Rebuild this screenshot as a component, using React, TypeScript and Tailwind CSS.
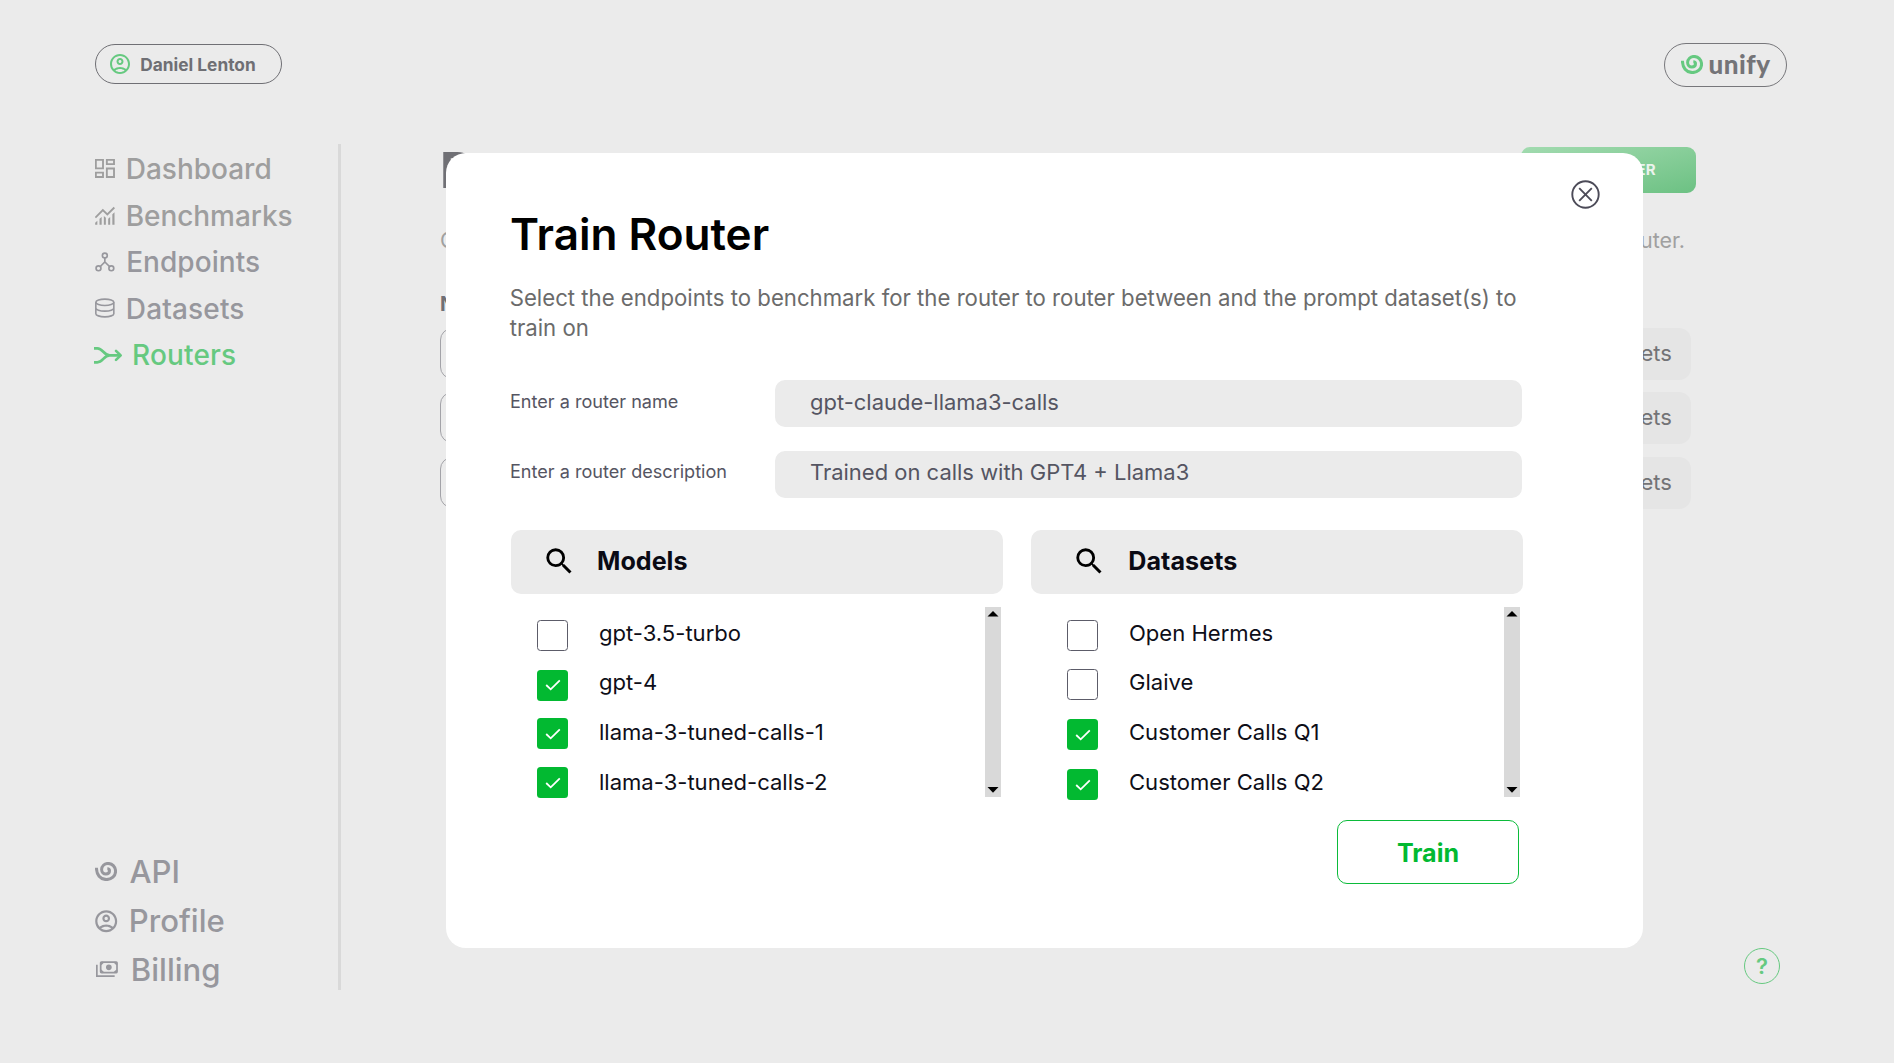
import React from "react";
import { MdOutlineAccountCircle, MdSearch } from "react-icons/md";

type IconProps = { className?: string };

const Spiral = ({ className }: IconProps) => (
  <svg viewBox="45 66 66 57" className={className} fill="none" stroke="currentColor" strokeWidth="9">
    <path d="M49.3 83C49 104 61 118.700 79 118.700C95 118.700 106.700 108 106.700 94C106.700 80 96.500 70.300 84 70.300C73 70.300 64.800 78.500 64.800 88.500C64.800 97 71 102 77.500 102C84.500 102 88.500 97.500 88.500 92.500C88.500 89 86 86.500 82 86.500" />
  </svg>
);

const DashboardIcon = () => (
  <svg viewBox="45 388 59 57" className="h-[19px] w-[19.700px]" fill="none" stroke="currentColor" strokeWidth="5.600">
    <path d="M47.500 390.500H69V416H47.500ZM80.500 390.500H102V403.500H80.500ZM47.500 429H69V442H47.500ZM80.500 416.500H102V442H80.500Z" />
  </svg>
);

const BenchmarksIcon = () => (
  <svg viewBox="45 529 59 57" className="h-[19px] w-[19.700px]" fill="currentColor">
    <path d="M46 564L68.500 541.500L82 554.500L103 533.500" fill="none" stroke="currentColor" strokeWidth="5.600" />
    <path d="M45.500 585V579L52 573V585ZM58.500 585V567L65 562V585ZM71.500 585V559L77.500 564V585ZM84.500 585V567L90.500 562V585ZM97 585V554L103.500 548V585Z" />
  </svg>
);

const EndpointsIcon = () => (
  <svg viewBox="46 667 60 60" className="h-5 w-5" fill="none" stroke="currentColor" strokeWidth="5">
    <circle cx="75.500" cy="677.500" r="7.300" />
    <circle cx="56.500" cy="716" r="7.300" />
    <circle cx="95" cy="716" r="7.300" />
    <path d="M75.500 685V697M62 710.500L75.500 697L89.500 710.500" />
  </svg>
);

const DatasetsIcon = () => (
  <svg viewBox="45 806 60 60" className="h-5 w-5" fill="none" stroke="currentColor" strokeWidth="4.800">
    <ellipse cx="74.500" cy="819" rx="27" ry="9.500" />
    <path d="M47.500 819V853C47.500 858 59 862.500 74.500 862.500S101.500 858 101.500 853V819M47.500 836C47.500 841 59 845.500 74.500 845.500S101.500 841 101.500 836" />
  </svg>
);

const RoutersIcon = () => (
  <svg viewBox="42 948 86 56" className="h-[18.700px] w-[28.700px]" fill="none" stroke="currentColor" strokeWidth="8" strokeLinejoin="round">
    <path d="M42 955H52C69 955 71 976 89 976H121M42 997H52C69 997 71 976 89 976" />
    <path d="M108 962.500L122 976L108 989.500" strokeLinecap="round" />
  </svg>
);

const BillingIcon = () => (
  <svg viewBox="48 365 66 50" className="h-[16.700px] w-[22px]" fill="none" stroke="currentColor" strokeWidth="5.200">
    <path d="M50.500 376V410.500H104" />
    <rect x="62" y="368.500" width="49" height="31" rx="2" />
    <path d="M62 376L70 368.500M103 368.500L111 376M62 392L70 399.500M103 399.500L111 392" />
    <circle cx="86.500" cy="384" r="8.500" fill="currentColor" stroke="none" />
  </svg>
);

function NavRow({ icon, label, className }: { icon: React.ReactNode; label: string; className: string }) {
  return (
    <div className={`flex items-center ${className}`}>
      {icon}
      <span className="pt-px">{label}</span>
    </div>
  );
}

function Sidebar() {
  return (
    <aside className="flex h-[846px] w-[341px] flex-col border-r-[3px] border-[#d9d9d9] pt-[1.500px] pl-[95px] font-medium">
      <nav className="text-[28px] text-[#97979d]">
        <NavRow icon={<DashboardIcon />} label="Dashboard" className="h-[46.550px] gap-[11px] text-[#9e9e9e]" />
        <NavRow icon={<BenchmarksIcon />} label="Benchmarks" className="h-[46.550px] gap-[11px] tracking-[-0.050px] text-[#9e9e9e]" />
        <NavRow icon={<EndpointsIcon />} label="Endpoints" className="h-[46.550px] gap-[11.200px] tracking-[0.050px]" />
        <NavRow icon={<DatasetsIcon />} label="Datasets" className="h-[46.550px] gap-[10.800px] tracking-[0.150px]" />
        <NavRow icon={<RoutersIcon />} label="Routers" className="-ml-px h-[46.550px] gap-[9.400px] tracking-[0.150px] text-[#66c980]" />
      </nav>
      <nav className="mt-[469px] text-[31.100px] text-[#97979d]">
        <NavRow icon={<Spiral className="h-[19px] w-[22px]" />} label="API" className="h-[49px] gap-[12.400px]" />
        <NavRow icon={<MdOutlineAccountCircle className="-ml-[2.200px] size-[26.400px]" />} label="Profile" className="h-[49px] gap-[9.600px]" />
        <NavRow icon={<BillingIcon />} label="Billing" className="ml-px h-[49px] gap-[12.800px]" />
      </nav>
    </aside>
  );
}

function TopBar() {
  return (
    <header className="flex h-[144px] items-start justify-between pr-[107px] pl-[95px]">
      <div className="mt-[44px] flex h-10 w-[187px] items-center gap-[8.300px] rounded-full border border-[#6f6f74] pl-3 text-[17.300px] font-bold text-[#6f6f74]">
        <MdOutlineAccountCircle className="size-6 text-[#66c980]" />
        <span className="pt-[1.500px]">Daniel Lenton</span>
      </div>
      <div className="mt-[43px] flex h-[43.500px] w-[123px] items-center rounded-full border border-[#77777b] pl-[16px] text-[#747478]">
        <Spiral className="h-[19px] w-[22px] text-[#66c980]" />
        <span className="ml-[5.500px] pb-[2px] font-['Lato'] text-[26px] leading-none font-black tracking-[0.500px]">unify</span>
      </div>
    </header>
  );
}

const routerRows = ["mt-0", "mt-3", "mt-[13px]"];

function RoutersPage() {
  return (
    <main className="ml-[99px] w-[1256px]">
      <div className="flex justify-between pt-[3px]">
        <h1 className="h-[46px] text-[50px] leading-[47px] font-bold text-[#707075]">Routers</h1>
        <div className="mr-[0.500px] flex h-[46px] w-[175px] items-center justify-end rounded-[9px] bg-linear-to-br from-[#a2dbb0] to-[#6cc183] pr-[40px] text-[15px] font-bold text-[#ebf3ed]">
          ROUTER
        </div>
      </div>
      <div className="mt-8 flex h-[30px] items-center justify-between pr-[11px] text-[21.500px] text-[#a0a0a0]">
        <span>Our</span>
        <span>router.</span>
      </div>
      <div className="mt-[34px] h-[30px] text-[20px] leading-[30px] font-bold text-[#707075]">Name</div>
      <div className="mt-[8.500px] w-[1251.300px]">
        {routerRows.map((row) => (
          <div key={row} className={`flex h-[52px] items-center justify-between ${row}`}>
            <div className="h-[51px] w-[600px] rounded-[12px] border border-[#a3a3a8]" />
            <div className="flex h-full w-[220px] items-center justify-end rounded-[12px] bg-[#e5e5e5] pr-[19.500px] text-[22px] text-[#737376]">
              Datasets
            </div>
          </div>
        ))}
      </div>
    </main>
  );
}

function Checkbox({ checked, className }: { checked: boolean; className: string }) {
  return checked ? (
    <span className={`flex size-[31px] shrink-0 items-center justify-center rounded-[3.500px] bg-[#02b931] ${className}`}>
      <svg viewBox="0 0 16 12" className="ml-px h-3 w-4" fill="none" stroke="white" strokeWidth="1.800">
        <path d="M1.200 6L5.700 10.300L14.800 1.300" />
      </svg>
    </span>
  ) : (
    <span className={`size-[31px] shrink-0 rounded-[3.500px] border-[1.500px] border-[#5c5c69] bg-white ${className}`} />
  );
}

type Option = { label: string; checked: boolean; box: string };

const models: Option[] = [
  { label: "gpt-3.5-turbo", checked: false, box: "mt-[5px]" },
  { label: "gpt-4", checked: true, box: "mt-[5px]" },
  { label: "llama-3-tuned-calls-1", checked: true, box: "mt-[2px]" },
  { label: "llama-3-tuned-calls-2", checked: true, box: "mt-0" },
];

const datasets: Option[] = [
  { label: "Open Hermes", checked: false, box: "mt-[5px]" },
  { label: "Glaive", checked: false, box: "mt-[3px]" },
  { label: "Customer Calls Q1", checked: true, box: "mt-[4px]" },
  { label: "Customer Calls Q2", checked: true, box: "mt-[4px]" },
];

function Scrollbar() {
  return (
    <div className="flex h-[190px] w-4 flex-col items-center justify-between bg-[#d9d9d9] pt-1 pb-[4.500px]">
      <svg viewBox="0 0 12 6" className="h-[6px] w-3"><path d="M0.500 5.500L6 0L11.500 5.500Z" /></svg>
      <svg viewBox="0 0 12 6" className="h-[6px] w-3"><path d="M0.500 0L6 5.700L11.500 0Z" /></svg>
    </div>
  );
}

type PickerProps = { title: string; options: Option[]; header: string; titleGap: string; list: string; bar: string };

function Picker({ title, options, header, titleGap, list, bar }: PickerProps) {
  return (
    <section className="w-[492px]">
      <div className={`flex h-16 items-center rounded-[10px] bg-[#ebebeb] pb-[2px] ${header}`}>
        <MdSearch className="size-[34.600px] text-black" />
        <h2 className={`pt-px text-[25.100px] font-bold text-[#0a0a14] ${titleGap}`}>{title}</h2>
      </div>
      <div className={`mt-[13px] flex h-[190px] justify-between ${bar}`}>
        <ul className={`pt-[1.300px] ${list}`}>
          {options.map((o) => (
            <li key={o.label} className="flex h-[49.800px] items-center text-[22.050px] text-[#0e0e18]">
              <Checkbox checked={o.checked} className={o.box} />
              <span className="ml-[31.500px]">{o.label}</span>
            </li>
          ))}
        </ul>
        <Scrollbar />
      </div>
    </section>
  );
}

function Field({ label, value, labelPad, valuePad }: { label: string; value: string; labelPad: string; valuePad: string }) {
  return (
    <label className="flex h-[47px] items-center text-[#555562]">
      <span className={`w-[265px] text-[18.080px] ${labelPad}`}>{label}</span>
      <span className={`flex h-full w-[747px] items-center rounded-[10px] bg-[#ebebeb] pl-[35px] text-[21.980px] ${valuePad}`}>{value}</span>
    </label>
  );
}

function TrainDialog() {
  return (
    <div className="absolute inset-0 pt-[153px] pl-[446px]">
      <div role="dialog" className="relative h-[795px] w-[1197px] rounded-[20px] bg-white pt-[56px] pl-[64px]">
        <svg viewBox="0 0 29 29" className="absolute top-[27.300px] right-[43px] size-[29px]" fill="none" stroke="#4c4b58" strokeWidth="1.900">
          <circle cx="14.500" cy="14.500" r="13.200" />
          <path d="M8.200 8.200L20.800 20.800M20.800 8.200L8.200 20.800" />
        </svg>
        <h1 className="h-[50px] text-[44.050px] leading-[51px] font-semibold text-black">Train Router</h1>
        <p className="mt-[24px] -ml-[0.300px] w-[1030px] text-[22.180px] leading-[30px] text-[#6b6b6b]">
          Select the endpoints to benchmark for the router to router between and the prompt dataset(s) to
          <br />
          train on
        </p>
        <div className="mt-[37px] flex flex-col gap-6">
          <Field label="Enter a router name" value="gpt-claude-llama3-calls" labelPad="pb-[3px]" valuePad="pb-[2px]" />
          <Field label="Enter a router description" value="Trained on calls with GPT4 + Llama3" labelPad="pb-[5px]" valuePad="pb-[4px]" />
        </div>
        <div className="mt-8 ml-px flex gap-7">
          <Picker title="Models" options={models} header="pl-[30.700px]" titleGap="ml-[20.800px]" list="pl-[25.500px]" bar="pr-[2px]" />
          <Picker title="Datasets" options={datasets} header="pl-[40.700px]" titleGap="ml-[22px] tracking-[0.050px]" list="pl-[35.500px]" bar="pr-[3px]" />
        </div>
        <button className="mt-[23px] ml-[827px] block h-16 w-[182px] rounded-[10px] border border-[#0bbb3a] pt-[2px] text-[25.100px] leading-[60px] font-bold text-[#02b931]">
          Train
        </button>
      </div>
    </div>
  );
}

export default function App() {
  return (
    <div className="relative h-[1063px] w-[1894px] overflow-hidden bg-[#ebebeb] font-['Inter',sans-serif]">
      <TopBar />
      <div className="flex">
        <Sidebar />
        <RoutersPage />
      </div>
      <div className="absolute top-[948px] left-[1744px] flex size-9 items-center justify-center rounded-full border border-[#66c980] text-[22px] font-semibold text-[#66c980]">
        ?
      </div>
      <TrainDialog />
    </div>
  );
}
